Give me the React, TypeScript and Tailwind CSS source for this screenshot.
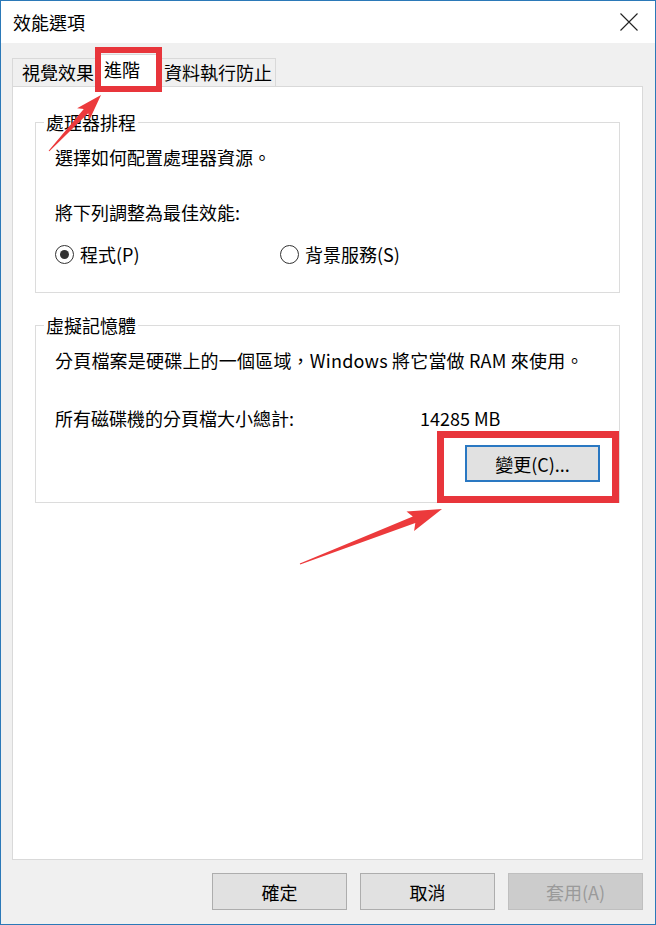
import React from "react";

type Pt = [number, number];

function arrowPoints(tail: Pt, tip: Pt, headLen: number, headW: number, shaftW: number, tailW: number): string {
  const dx = tip[0] - tail[0];
  const dy = tip[1] - tail[1];
  const L = Math.hypot(dx, dy);
  const ux = dx / L;
  const uy = dy / L;
  const nx = -uy;
  const ny = ux;
  const bx = tip[0] - ux * headLen;
  const by = tip[1] - uy * headLen;
  const bbx = tip[0] - ux * (headLen + 4);
  const bby = tip[1] - uy * (headLen + 4);
  const pts: Pt[] = [
    [tail[0] + (nx * tailW) / 2, tail[1] + (ny * tailW) / 2],
    [bx + (nx * shaftW) / 2, by + (ny * shaftW) / 2],
    [bbx + (nx * headW) / 2, bby + (ny * headW) / 2],
    [tip[0], tip[1]],
    [bbx - (nx * headW) / 2, bby - (ny * headW) / 2],
    [bx - (nx * shaftW) / 2, by - (ny * shaftW) / 2],
    [tail[0] - (nx * tailW) / 2, tail[1] - (ny * tailW) / 2],
  ];
  return pts.map((p) => `${p[0].toFixed(1)},${p[1].toFixed(1)}`).join(" ");
}

function Radio({ checked }: { checked: boolean }) {
  return (
    <span className="w-[19px] h-[19px] rounded-full border border-[#333333] bg-white flex items-center justify-center shrink-0">
      {checked && <span className="w-[9px] h-[9px] rounded-full bg-[#333333]" />}
    </span>
  );
}

export default function App() {
  return (
    <div className="relative w-[656px] h-[925px] border border-[#2b79b8] bg-[#f0f0f0] flex flex-col font-['Noto_Sans_CJK_TC','Noto_Sans_CJK_SC',sans-serif] text-[18px] text-black overflow-hidden">
      {/* Title bar */}
      <div className="h-[42px] bg-white flex items-center justify-between pl-[12px] pr-[14px] shrink-0">
        <span className="leading-[24px] text-[18px]">效能選項</span>
        <svg width="20" height="20" viewBox="0 0 20 20" className="mr-[2px]">
          <path d="M1.5 1.5 L18.5 18.5 M18.5 1.5 L1.5 18.5" stroke="#222" strokeWidth="1.1" fill="none" />
        </svg>
      </div>

      {/* Tabs */}
      <div className="relative z-10 mt-[12px] h-[32px] -mb-px ml-[11px] flex items-end shrink-0">
        <div className="w-[84px] h-[29px] border border-[#d9d9d9] bg-[#f0f0f0] flex items-center pl-[9px] pb-[2px] leading-[24px]">
          視覺效果
        </div>
        <div className="w-[64px] h-[33px] border border-b-0 border-[#d9d9d9] bg-white flex items-center pl-[7px] pb-[4px] leading-[24px]">
          進階
        </div>
        <div className="w-[116px] h-[29px] border border-[#d9d9d9] bg-[#f0f0f0] flex items-center justify-center pb-[2px] leading-[24px]">
          資料執行防止
        </div>
      </div>

      {/* Panel */}
      <div className="flex-1 ml-[11px] mr-[12px] bg-white border border-[#d9d9d9] flex flex-col">
        {/* Group 1 */}
        <fieldset className="mx-[22px] mt-[25px] border border-[#dcdcdc] pl-[19px] pr-[19px] pb-[26px]">
          <legend className="-ml-[11px] px-[2px] leading-[20px] text-[18px]">處理器排程</legend>
          <div className="mt-[13px] leading-[24px]">選擇如何配置處理器資源。</div>
          <div className="mt-[31px] leading-[24px]">將下列調整為最佳效能:</div>
          <div className="mt-[18px] h-[24px] flex items-center">
            <div className="w-[225px] flex items-center gap-[6px]">
              <Radio checked />
              <span className="leading-[24px]">程式(P)</span>
            </div>
            <div className="flex items-center gap-[6px]">
              <Radio checked={false} />
              <span className="leading-[24px]">背景服務(S)</span>
            </div>
          </div>
        </fieldset>

        {/* Group 2 */}
        <fieldset className="mx-[22px] mt-[22px] border border-[#dcdcdc] pl-[19px] pr-[19px] pb-[20px]">
          <legend className="-ml-[11px] px-[2px] leading-[20px] text-[18px]">虛擬記憶體</legend>
          <div className="mt-[13px] leading-[24px] tracking-[0.2px]">分頁檔案是硬碟上的一個區域，Windows 將它當做 RAM 來使用。</div>
          <div className="mt-[34px] leading-[24px] flex">
            <span className="w-[365px]">所有磁碟機的分頁檔大小總計:</span>
            <span>14285 MB</span>
          </div>
          <div className="mt-[15px] flex justify-end">
            <button className="w-[135px] h-[37px] border-2 border-[#2a78c2] bg-[#e1e1e1] flex items-center justify-center leading-[24px] text-[18px]">
              變更(C)...
            </button>
          </div>
        </fieldset>
      </div>

      {/* Footer buttons */}
      <div className="pt-[13px] pb-[14px] pr-[12px] flex justify-end gap-[13px] shrink-0">
        <button className="w-[135px] h-[37px] border border-[#adadad] bg-[#e1e1e1] flex items-center justify-center text-[18px] leading-[24px]">
          確定
        </button>
        <button className="w-[135px] h-[37px] border border-[#adadad] bg-[#e1e1e1] flex items-center justify-center text-[18px] leading-[24px]">
          取消
        </button>
        <button className="w-[135px] h-[37px] border border-[#bfbfbf] bg-[#cccccc] text-[#9a9a9a] flex items-center justify-center text-[18px] leading-[24px]">
          套用(A)
        </button>
      </div>

      {/* Annotations */}
      <div className="absolute left-[94px] top-[46px] w-[67px] h-[45px] border-[6px] border-[#e8353b] z-20 pointer-events-none" />
      <div className="absolute left-[436px] top-[430px] w-[182px] h-[72px] border-[7px] border-[#e8353b] z-20 pointer-events-none" />
      <svg className="absolute left-0 top-0 z-20 pointer-events-none" width="656" height="925" viewBox="0 0 656 925">
        <polygon points={arrowPoints([48, 150], [100, 94], 22, 17, 6, 1)} fill="#ec3a3c" />
        <polygon points={arrowPoints([299, 563], [441, 508], 30, 21, 7, 1)} fill="#ec3a3c" />
      </svg>
    </div>
  );
}
